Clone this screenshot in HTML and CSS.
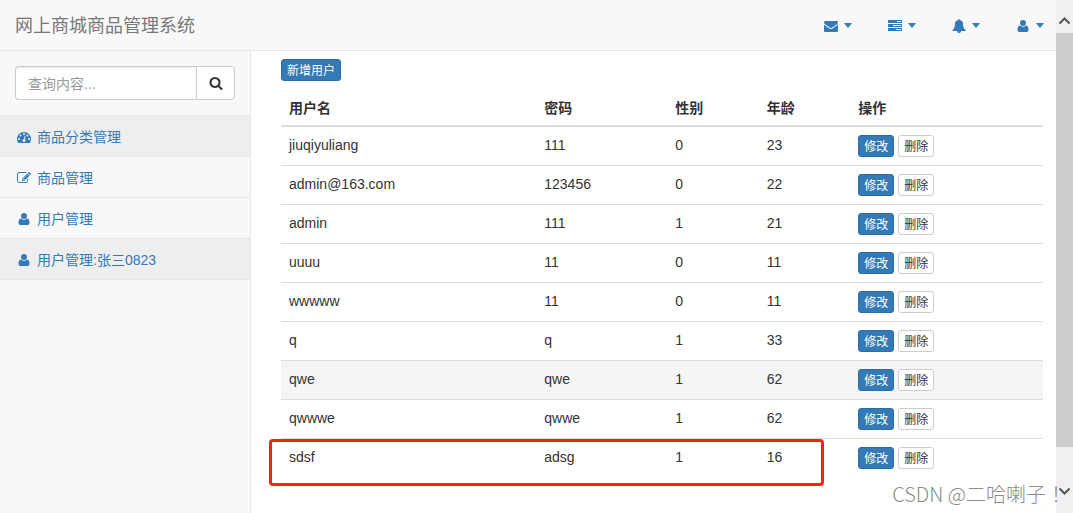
FILE: index.html
```html
<!DOCTYPE html>
<html lang="zh-CN">
<head>
<meta charset="utf-8">
<title>网上商城商品管理系统</title>
<link rel="stylesheet" href="styles.css">
</head>
<body>
<svg class="sprite" aria-hidden="true">
  <symbol id="envelope" viewBox="0 0 1792 1792"><path d="M1792 710v794q0 66-47 113t-113 47h-1472q-66 0-113-47t-47-113v-794q44 49 101 87 362 246 497 345 57 42 92.500 65.500t94.500 48 110 24.500h2q51 0 110-24.500t94.500-48 92.500-65.500q170-123 498-345 57-39 100-87zm0-294q0 79-49 151t-122 123q-376 261-468 325-10 7-42.500 31t-54 38-52 32.500-57.500 27-50 9h-2q-23 0-50-9t-57.500-27-52-32.500-54-38-42.500-31q-91-64-262-182.500t-205-142.500q-62-42-117-115.500t-55-136.500q0-78 41.500-130t118.500-52h1472q65 0 112.500 47t47.500 113z"/></symbol>
  <symbol id="tasks" viewBox="0 0 14 14"><path fill-rule="evenodd" d="M0 1h14v3H0zM9 2v1h4V2zM0 5h14v3H0zM5 6v1h8V6zM0 9h14v3H0zM8 10v1h5v-1z"/></symbol>
  <symbol id="bell" viewBox="0 0 1792 1792"><path d="M912 1696q0-16-16-16-59 0-101.500-42.500t-42.500-101.500q0-16-16-16t-16 16q0 73 51.500 124.500t124.500 51.500q16 0 16-16zm816-288q0 52-38 90t-90 38h-448q0 106-75 181t-181 75-181-75-75-181h-448q-52 0-90-38t-38-90q50-42 91-88t85-119.500 74.500-158.500 50-206 19.500-260q0-152 117-282.500t307-158.500q-8-19-8-39 0-40 28-68t68-28 68 28 28 68q0 20-8 39 190 28 307 158.500t117 282.500q0 139 19.500 260t50 206 74.500 158.500 85 119.500 91 88z"/></symbol>
  <symbol id="user" viewBox="0 0 14 14"><path d="M7 1a3 3 0 1 1 0 6a3 3 0 0 1 0-6zM4 6.500Q5.300 7.800 7 7.800T10 6.500Q12.500 6.500 12.500 11Q12.500 13 10.700 13H3.300Q1.500 13 1.500 11Q1.500 6.500 4 6.500z"/></symbol>
  <symbol id="search" viewBox="0 0 1792 1792"><path d="M1216 832q0-185-131.500-316.500t-316.500-131.500-316.500 131.500-131.500 316.500 131.500 316.500 316.500 131.500 316.500-131.500 131.500-316.500zm512 832q0 52-38 90t-90 38q-54 0-90-38l-343-342q-179 124-399 124-143 0-273.500-55.500t-225-150-150-225-55.500-273.500 55.500-273.500 150-225 225-150 273.500-55.500 273.500 55.500 225 150 150 225 55.500 273.500q0 220-124 399l343 343q37 37 37 90z"/></symbol>
  <symbol id="edit" viewBox="0 0 1792 1792"><path d="M888 1184l116-116-152-152-116 116v56h96v96h56zm440-720q-16-16-33 1l-350 350q-17 17-1 33t33-1l350-350q17-17 1-33zm80 594v190q0 119-84.500 203.500t-203.500 84.500h-832q-119 0-203.500-84.500t-84.500-203.500v-832q0-119 84.500-203.500t203.500-84.500h832q63 0 117 25 15 7 18 23 3 17-9 29l-49 49q-14 14-32 8-23-6-45-6h-832q-66 0-113 47t-47 113v832q0 66 47 113t113 47h832q66 0 113-47t47-113v-126q0-13 9-22l64-64q15-15 35-7t20 29zm-96-738l288 288-672 672h-288v-288zm444 132l-92 92-288-288 92-92q28-28 68-28t68 28l152 152q28 28 28 68t-28 68z"/></symbol>
  <symbol id="dashboard" viewBox="0 0 1792 1792"><path d="M384 1152q0-53-37.500-90.500t-90.500-37.500-90.500 37.500-37.500 90.500 37.500 90.500 90.500 37.500 90.500-37.500 37.500-90.500zm192-448q0-53-37.500-90.500t-90.500-37.500-90.500 37.500-37.500 90.500 37.500 90.500 90.500 37.500 90.500-37.500 37.500-90.500zm428 481l101-382q6-26-7.500-48.500t-38.500-29.500-48 6.500-30 39.500l-101 382q-60 5-107 43.500t-63 98.500q-20 77 20 146t117 89 146-20 89-117q16-60-6-117t-72-91zm660-33q0-53-37.500-90.500t-90.500-37.500-90.500 37.500-37.500 90.500 37.500 90.500 90.500 37.500 90.500-37.500 37.500-90.500zm-640-640q0-53-37.500-90.500t-90.500-37.500-90.500 37.500-37.500 90.500 37.500 90.500 90.500 37.500 90.500-37.500 37.500-90.500zm448 192q0-53-37.500-90.500t-90.500-37.500-90.500 37.500-37.500 90.500 37.500 90.500 90.500 37.500 90.500-37.500 37.500-90.500zm320 448q0 261-141 483-19 29-54 29h-1402q-35 0-54-29-141-221-141-483 0-182 71-348t191-286 286-191 348-71 348 71 286 191 191 286 71 348z"/></symbol>
</svg>
<div class="app">
  <div class="page">
    <header class="navbar">
      <a class="brand" href="#">网上商城商品管理系统</a>
      <nav class="top-links">
        <a href="#" aria-label="消息"><svg class="icon"><use href="#envelope"/></svg><i class="caret"></i></a>
        <a href="#" aria-label="任务"><svg class="icon"><use href="#tasks"/></svg><i class="caret"></i></a>
        <a href="#" aria-label="通知"><svg class="icon"><use href="#bell"/></svg><i class="caret"></i></a>
        <a href="#" aria-label="用户"><svg class="icon"><use href="#user"/></svg><i class="caret"></i></a>
      </nav>
    </header>
    <div class="body">
      <aside class="sidebar">
        <form class="search">
          <input class="search-input" type="text" placeholder="查询内容..." aria-label="查询内容">
          <button class="search-button" type="button" aria-label="查询"><svg class="icon"><use href="#search"/></svg></button>
        </form>
        <nav class="menu">
          <a class="active" href="#"><svg class="icon"><use href="#dashboard"/></svg>商品分类管理</a>
          <a href="#"><svg class="icon"><use href="#edit"/></svg>商品管理</a>
          <a href="#"><svg class="icon"><use href="#user"/></svg>用户管理</a>
          <a class="active" href="#"><svg class="icon"><use href="#user"/></svg>用户管理:张三0823</a>
        </nav>
      </aside>
      <main class="content">
        <button class="btn primary" type="button">新增用户</button>
        <table class="users">
          <colgroup><col class="col-name"><col class="col-password"><col class="col-small"><col class="col-small"><col></colgroup>
          <thead>
            <tr><th>用户名</th><th>密码</th><th>性别</th><th>年龄</th><th>操作</th></tr>
          </thead>
          <tbody>
            <tr><td>jiuqiyuliang</td><td>111</td><td>0</td><td>23</td><td><div class="actions"><button class="btn primary" type="button">修改</button><button class="btn" type="button">删除</button></div></td></tr>
            <tr><td>admin@163.com</td><td>123456</td><td>0</td><td>22</td><td><div class="actions"><button class="btn primary" type="button">修改</button><button class="btn" type="button">删除</button></div></td></tr>
            <tr><td>admin</td><td>111</td><td>1</td><td>21</td><td><div class="actions"><button class="btn primary" type="button">修改</button><button class="btn" type="button">删除</button></div></td></tr>
            <tr><td>uuuu</td><td>11</td><td>0</td><td>11</td><td><div class="actions"><button class="btn primary" type="button">修改</button><button class="btn" type="button">删除</button></div></td></tr>
            <tr><td>wwwww</td><td>11</td><td>0</td><td>11</td><td><div class="actions"><button class="btn primary" type="button">修改</button><button class="btn" type="button">删除</button></div></td></tr>
            <tr><td>q</td><td>q</td><td>1</td><td>33</td><td><div class="actions"><button class="btn primary" type="button">修改</button><button class="btn" type="button">删除</button></div></td></tr>
            <tr class="hovered"><td>qwe</td><td>qwe</td><td>1</td><td>62</td><td><div class="actions"><button class="btn primary" type="button">修改</button><button class="btn" type="button">删除</button></div></td></tr>
            <tr><td>qwwwe</td><td>qwwe</td><td>1</td><td>62</td><td><div class="actions"><button class="btn primary" type="button">修改</button><button class="btn" type="button">删除</button></div></td></tr>
            <tr class="marked"><td>sdsf<span class="marker"></span></td><td>adsg</td><td>1</td><td>16</td><td><div class="actions"><button class="btn primary" type="button">修改</button><button class="btn" type="button">删除</button></div></td></tr>
          </tbody>
        </table>
      </main>
    </div>
  </div>
  <div class="scrollbar" aria-hidden="true">
    <div class="scroll-arrow"><svg viewBox="0 0 13 9"><path d="M1.500 7.500l5-5 5 5"/></svg></div>
    <div class="scroll-thumb"></div>
    <div class="scroll-track"></div>
    <div class="scroll-arrow down"><svg viewBox="0 0 13 9"><path d="M1.500 1.500l5 5 5-5"/></svg></div>
  </div>
  <div class="watermark" lang="ja">CSDN @二哈喇子！</div>
</div>
</body>
</html>
```
FILE: styles.css
```css
* {
  box-sizing: border-box;
}

body {
  margin: 0;
  color: #333;
  background: #fff;
  font: 14px/20px "Liberation Sans", "Noto Sans CJK SC", sans-serif;
}

button,
input {
  font-family: inherit;
}

a {
  color: #337ab7;
  text-decoration: none;
}

.sprite {
  display: none;
}

.icon {
  width: 14px;
  height: 14px;
  flex: none;
  fill: currentColor;
}

.app {
  position: relative;
  display: flex;
  min-height: 100vh;
  overflow: hidden;
}

.page {
  flex: 1;
  min-width: 0;
  display: flex;
  flex-direction: column;
}

.navbar {
  display: flex;
  align-items: center;
  justify-content: space-between;
  height: 51px;
  padding: 1px 12px 0 15px;
  background: #f8f8f8;
  border-bottom: 1px solid #e7e7e7;
}

.brand {
  color: #777;
  font-size: 18px;
}

.top-links {
  display: flex;
  gap: 36px;
}

.top-links a {
  display: flex;
  align-items: center;
  gap: 6px;
}

.caret {
  border-top: 5px solid;
  border-left: 4px solid transparent;
  border-right: 4px solid transparent;
}

.body {
  flex: 1;
  display: flex;
}

.sidebar {
  flex: none;
  width: 251px;
  background: #f8f8f8;
  border-right: 1px solid #e7e7e7;
}

.search {
  display: flex;
  padding: 15px;
  border-bottom: 1px solid #e7e7e7;
}

.search-input {
  flex: 1;
  min-width: 0;
  height: 34px;
  padding: 7px 12px 5px;
  font-size: 14px;
  background: #fff;
  border: 1px solid #ccc;
  border-right: 0;
  border-radius: 4px 0 0 4px;
  box-shadow: inset 0 1px 1px rgba(0, 0, 0, 0.08);
}

.search-input::placeholder {
  color: #999;
}

.search-button {
  display: flex;
  align-items: center;
  justify-content: center;
  width: 39px;
  padding: 0;
  color: #333;
  background: #fff;
  border: 1px solid #ccc;
  border-radius: 0 4px 4px 0;
}

.menu a {
  display: flex;
  align-items: center;
  gap: 6px;
  padding: 11px 17px 9px;
  border-bottom: 1px solid #e7e7e7;
}

.menu .active {
  background: #eee;
}

.content {
  flex: 1;
  min-width: 0;
  padding: 8px 13px 20px 30px;
}

.btn {
  height: 22px;
  padding: 1px 5px 0;
  color: #333;
  font-size: 12px;
  line-height: 20px;
  background: #fff;
  border: 1px solid #ccc;
  border-radius: 3px;
  display: block;
}

.btn.primary {
  color: #fff;
  background: #337ab7;
  border-color: #2e6da4;
}

.users {
  width: 100%;
  margin-top: 8px;
  table-layout: fixed;
  border-spacing: 0;
}

.col-name {
  width: 33.500%;
}

.col-password {
  width: 17.200%;
}

.col-small {
  width: 12%;
}

.users th,
.users td {
  padding: 8px;
  text-align: left;
  vertical-align: top;
  border-bottom: 1px solid #ddd;
}

.users th {
  padding: 9px 8px 7px;
  border-bottom-width: 2px;
}

.users tr:last-child td {
  border-bottom: 0;
}

.hovered {
  background: #f5f5f5;
}

.actions {
  display: flex;
  gap: 4px;
}

.marked {
  position: relative;
}

.marker {
  position: absolute;
  top: 0;
  right: 219px;
  bottom: -9px;
  left: -12px;
  border: 3px solid #ff2015;
  border-radius: 4px;
}

.scrollbar {
  flex: none;
  width: 17px;
  display: flex;
  flex-direction: column;
  background: #f0f0f0;
}

.scroll-arrow {
  display: flex;
  align-items: center;
  justify-content: center;
  padding: 16px 0 8px;
}

.scroll-arrow.down {
  padding: 7px 0 17px;
}

.scroll-arrow svg {
  width: 13px;
  height: 9px;
  fill: none;
  stroke: #555;
  stroke-width: 2;
}

.scroll-thumb {
  flex: 414;
  background: #cdcdcd;
}

.scroll-track {
  flex: 33;
}

.watermark {
  position: absolute;
  right: 7px;
  bottom: 6px;
  color: #8c8c8c;
  font-family: "Noto Sans CJK JP", sans-serif;
  font-size: 20px;
  font-weight: 300;
  line-height: 26px;
  white-space: nowrap;
}
```
